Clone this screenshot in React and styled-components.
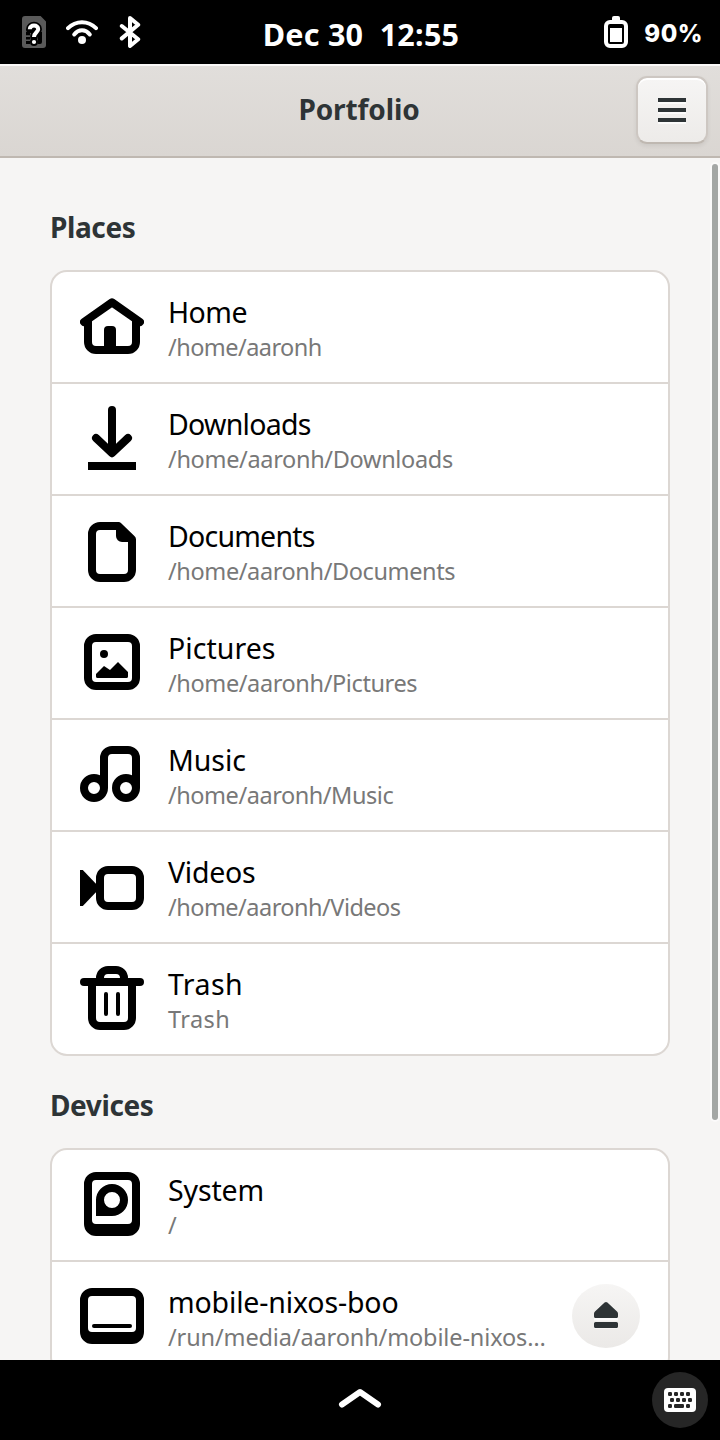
import React from 'react';
import styled, { createGlobalStyle } from 'styled-components';

const Global = createGlobalStyle`
  * { box-sizing: border-box; }
  body { margin: 0; background: #f6f5f4; }
`;

const Phone = styled.div`
  display: flex;
  flex-direction: column;
  width: 720px;
  height: 1440px;
  overflow: hidden;
  font-family: 'Noto Sans', Cantarell, sans-serif;
  background: #f6f5f4;
`;

const StatusBar = styled.header`
  flex: none;
  display: grid;
  grid-template-columns: 1fr auto 1fr;
  align-items: center;
  height: 64px;
  padding: 0 17px 0 18px;
  color: #fff;
  background: #000;
`;

const StatusGroup = styled.div`
  display: flex;
  align-items: center;
  gap: ${(p) => p.$gap};
  justify-content: ${(p) => (p.$end ? 'flex-end' : 'flex-start')};
`;

const Clock = styled.div`
  font-size: 30.5px;
  font-weight: 660;
  line-height: 40px;
  letter-spacing: 0.25px;
  white-space: pre;
  padding: 3px 0 0 1px;
`;

const BatteryText = styled.span`
  font-family: Inter, sans-serif;
  font-size: 24px;
  font-weight: 800;
  line-height: 32px;
  letter-spacing: 0.5px;
  padding-top: 3px;
`;

const Glyph = styled.svg`
  flex: none;
  display: block;
  width: ${(p) => p.$size || 32}px;
  height: ${(p) => p.$size || 32}px;
`;

const HeaderBar = styled.div`
  flex: none;
  display: grid;
  grid-template-columns: 72px 1fr 72px;
  align-items: center;
  height: 94px;
  padding: 0 12px 2px;
  border-top: 2px solid #faf9f8;
  border-bottom: 2px solid #bfb8b1;
  background: linear-gradient(#e1dedb, #dad6d2);
`;

const WindowTitle = styled.h1`
  grid-column: 2;
  margin: 0;
  padding: 0 2px 2px 0;
  text-align: center;
  font-size: 28px;
  font-weight: 670;
  line-height: 40px;
  letter-spacing: -0.1px;
  color: #2e3436;
`;

const MenuButton = styled.button`
  display: flex;
  flex-direction: column;
  align-items: center;
  justify-content: center;
  gap: 6px;
  width: 72px;
  height: 68px;
  padding: 0;
  border: 2px solid #cdc7c2;
  border-bottom-color: #bfb8b1;
  border-radius: 11px;
  background: linear-gradient(#f6f5f4, #edebe9);
  box-shadow: inset 0 2px #fff, 0 2px 4px rgba(0, 0, 0, 0.07);
`;

const MenuLine = styled.span`
  width: 28px;
  height: 4px;
  background: #2e3436;
  box-shadow: 0 2px rgba(255, 255, 255, 0.75);
`;

const Content = styled.main`
  position: relative;
  flex: 1;
  min-height: 0;
  overflow: hidden;
  padding: 49px 50px 0;
`;

const ScrollThumb = styled.div`
  position: absolute;
  top: 6px;
  right: 2px;
  width: 6px;
  height: 956px;
  border-radius: 3px;
  background: #a4a7a5;
  box-shadow: 0 0 0 2px rgba(255, 255, 255, 0.5);
`;

const SectionTitle = styled.h2`
  margin: 0 0 23px;
  font-size: 28px;
  font-weight: 670;
  line-height: 40px;
  letter-spacing: -0.39px;
  color: #2e3436;
`;

const Card = styled.section`
  margin-bottom: 29px;
  border: 2px solid #dcd7d3;
  border-radius: 17px;
  background: #fff;
  overflow: hidden;
`;

const Row = styled.div`
  display: flex;
  align-items: center;
  height: 110px;
  padding: 0 28px;
  gap: 24px;

  & + & {
    height: 112px;
    border-top: 2px solid #dcd7d3;
  }
`;

const RowIcon = styled(Glyph)`
  margin-bottom: 2px;
  color: #000;
`;

const Labels = styled.div`
  flex: 1;
  min-width: 0;
  padding-top: 2px;
  white-space: nowrap;
  font-weight: 370;
`;

const Name = styled.div`
  font-size: 28.5px;
  line-height: 38px;
  letter-spacing: ${(p) => p.$track}px;
  color: #000;
`;

const Path = styled.div`
  font-size: 23.5px;
  line-height: 33px;
  letter-spacing: ${(p) => p.$track}px;
  color: #787878;
`;

const EjectButton = styled.button`
  flex: none;
  display: grid;
  place-items: center;
  width: 68px;
  height: 64px;
  margin-bottom: 2px;
  padding: 0;
  border: 0;
  border-radius: 34px / 32px;
  background: linear-gradient(#f6f5f4, #ebe9e7);
`;

const BottomBar = styled.footer`
  flex: none;
  display: grid;
  grid-template-columns: 56px 1fr 56px;
  align-items: center;
  height: 80px;
  padding: 0 12px;
  background: #000;
`;

const Chevron = styled.svg`
  grid-column: 2;
  justify-self: center;
  display: block;
  width: 48px;
  height: 32px;
  margin-bottom: 6px;
`;

const KeyboardButton = styled.div`
  display: grid;
  place-items: center;
  width: 56px;
  height: 56px;
  border-radius: 50%;
  background: #262626;
`;

const ICONS = {
  home: (
    <g fill="none" stroke="currentColor" strokeWidth="2">
      <path d="M1 7 8 2.1 15 7" strokeLinecap="round" strokeLinejoin="round" />
      <path d="M2 6.6V12a2 2 0 0 0 2 2h8a2 2 0 0 0 2-2V6.6" />
      <path d="M6 14V9a1 1 0 0 1 1-1h1a1 1 0 0 1 1 1v5z" fill="currentColor" stroke="none" />
    </g>
  ),
  downloads: (
    <g fill="none" stroke="currentColor" strokeWidth="2">
      <path d="M8 1v10.7M4 8l4 3.8L12 8" strokeLinecap="round" strokeLinejoin="round" />
      <path d="M2 15h12" />
    </g>
  ),
  documents: (
    <path
      fill="currentColor"
      fillRule="evenodd"
      d="M5 1h4.6a1 1 0 0 1 .7.3l3.3 3.2a1 1 0 0 1 .4.8V13a3 3 0 0 1-3 3H5a3 3 0 0 1-3-3V4a3 3 0 0 1 3-3zM5 3a1 1 0 0 0-1 1v9a1 1 0 0 0 1 1h6a1 1 0 0 0 1-1V6h-1.5a1.5 1.5 0 0 1-1.5-1.5V3z"
    />
  ),
  pictures: (
    <g fill="currentColor">
      <rect x="2" y="2" width="12" height="12" rx="2" fill="none" stroke="currentColor" strokeWidth="2" />
      <circle cx="6" cy="6" r="1" />
      <path d="M4 11.6V11l2-2 1.5 1L9.5 8l2.5 2.5v1.1a.4.4 0 0 1-.4.4H4.4a.4.4 0 0 1-.4-.4z" />
    </g>
  ),
  music: (
    <g fill="none" stroke="currentColor" strokeWidth="2">
      <circle cx="3.5" cy="11.5" r="2.5" />
      <circle cx="11.5" cy="11.5" r="2.5" />
      <path d="M6 11.5V4a2 2 0 0 1 2-2h4a2 2 0 0 1 2 2v7.5" />
    </g>
  ),
  videos: (
    <g fill="currentColor">
      <rect x="5" y="4" width="10" height="9" rx="2" fill="none" stroke="currentColor" strokeWidth="2" />
      <path d="M0 4h.7L5 8.5.7 13H0z" />
    </g>
  ),
  trash: (
    <g fill="none" stroke="currentColor" strokeWidth="2">
      <path d="M1 4h14" strokeLinecap="round" />
      <path d="M5 4V3a2 2 0 0 1 2-2h2a2 2 0 0 1 2 2v1" />
      <path d="M3 4v9a2 2 0 0 0 2 2h6a2 2 0 0 0 2-2V4" />
      <path d="M6.5 7v5M9.5 7v5" strokeWidth="1" strokeLinecap="round" />
    </g>
  ),
  system: (
    <path
      fill="currentColor"
      fillRule="evenodd"
      d="M4 0h8a3 3 0 0 1 3 3v10a3 3 0 0 1-3 3H4a3 3 0 0 1-3-3V3a3 3 0 0 1 3-3zM4 2a1 1 0 0 0-1 1v9a1 1 0 0 0 1 1h8a1 1 0 0 0 1-1V3a1 1 0 0 0-1-1zM8 3a4 4 0 1 1 0 8H4V7a4 4 0 0 1 4-4zM8 5a2 2 0 1 0 0 4 2 2 0 0 0 0-4z"
    />
  ),
  drive: (
    <g>
      <path
        fill="currentColor"
        fillRule="evenodd"
        d="M3 1h10a3 3 0 0 1 3 3v8a3 3 0 0 1-3 3H3a3 3 0 0 1-3-3V4a3 3 0 0 1 3-3zM3 3a1 1 0 0 0-1 1v7a1 1 0 0 0 1 1h10a1 1 0 0 0 1-1V4a1 1 0 0 0-1-1z"
      />
      <path d="M3.5 10.5h9" stroke="currentColor" strokeLinecap="round" />
    </g>
  ),
};

const PLACES = [
  ['home', 'Home', -0.5, '/home/aaronh', -0.55],
  ['downloads', 'Downloads', -0.74, '/home/aaronh/Downloads', -0.33],
  ['documents', 'Documents', -0.78, '/home/aaronh/Documents', -0.39],
  ['pictures', 'Pictures', 0.05, '/home/aaronh/Pictures', -0.39],
  ['music', 'Music', -0.07, '/home/aaronh/Music', -0.46],
  ['videos', 'Videos', -0.28, '/home/aaronh/Videos', -0.52],
  ['trash', 'Trash', 0.45, 'Trash', 0.42],
];

const RowBody = ({ icon, name, nameTrack, path, pathTrack }) => (
  <>
    <RowIcon $size={64} viewBox="0 0 16 16">{ICONS[icon]}</RowIcon>
    <Labels>
      <Name $track={nameTrack}>{name}</Name>
      <Path $track={pathTrack}>{path}</Path>
    </Labels>
  </>
);

const SimIcon = () => (
  <Glyph viewBox="0 0 16 16">
    <path d="M3.5 0h7.8L14 2.8v11.7a1.5 1.5 0 0 1-1.5 1.5h-9A1.5 1.5 0 0 1 2 14.5v-13A1.5 1.5 0 0 1 3.5 0z" fill="#5a5a5a" />
    <path d="M4 8h2v1.6H4zM4 10.5h2v1.2H4zM4 12.5h2V14H4zM10 8h2v5a1 1 0 0 1-1 1h-1z" fill="#000" />
    <path
      d="M5.9 6.6C5.9 5.5 6.8 4.8 8 4.8s2.1.7 2.1 1.8c0 1.5-2.1 1.6-2.1 3.9"
      fill="none"
      stroke="#000"
      strokeWidth="3.8"
      strokeLinecap="round"
    />
    <circle cx="8" cy="13" r="2" fill="#000" />
    <path
      d="M5.9 6.6C5.9 5.5 6.8 4.8 8 4.8s2.1.7 2.1 1.8c0 1.5-2.1 1.6-2.1 3.9"
      fill="none"
      stroke="#fff"
      strokeWidth="2"
    />
    <circle cx="8" cy="13" r="1.05" fill="#fff" />
  </Glyph>
);

const WifiIcon = () => (
  <Glyph viewBox="0 0 16 16">
    <g fill="none" stroke="#fff" strokeWidth="2" strokeLinecap="round">
      <path d="M1 6.1C5 2.1 11 2.1 15 6.1" />
      <path d="M4.1 9.2C6.3 6.5 9.7 6.5 11.9 9.2" />
    </g>
    <circle cx="8" cy="12" r="2" fill="#fff" />
  </Glyph>
);

const BluetoothIcon = () => (
  <Glyph viewBox="0 0 16 16">
    <path
      d="M3.9 5 12.1 11.6 8 15V1l4.1 3.4L3.9 11.2"
      fill="none"
      stroke="#fff"
      strokeWidth="2"
      strokeLinecap="round"
      strokeLinejoin="round"
    />
  </Glyph>
);

const BatteryIcon = () => (
  <Glyph viewBox="0 0 16 16">
    <rect x="3" y="3" width="10" height="12" rx="2" fill="none" stroke="#fff" strokeWidth="2" />
    <path d="M6 2.5V1a1 1 0 0 1 1-1h2a1 1 0 0 1 1 1v1.5z" fill="#fff" />
    <path d="M5 6h6v7H5z" fill="#fff" />
  </Glyph>
);

const EjectIcon = () => (
  <Glyph viewBox="0 0 16 16">
    <path d="M2 8h12v2.2H2zM2 12h12v2.2H2z" fill="#fff" opacity=".8" />
    <path
      d="M7.3 1.3a1 1 0 0 1 1.4 0L13.5 5.8a1.5 1.5 0 0 1 .5 1.1v1.300a.8.8 0 0 1-.8.8H2.800a.8.8 0 0 1-.8-.8V6.900a1.500 1.500 0 0 1 .5-1.100zM2.800 11h10.400a.8.8 0 0 1 .8.8v1.400a.8.8 0 0 1-.8.8H2.800a.8.8 0 0 1-.8-.8v-1.400a.8.8 0 0 1 .8-.8z"
      fill="#2e3436"
    />
  </Glyph>
);

const KEYS = [
  [2, 2], [5, 2], [8, 2], [11, 2],
  [3, 5], [6, 5], [9, 5], [12, 5],
  [2, 8], [11, 8],
];

const KeyboardIcon = () => (
  <Glyph viewBox="0 0 16 16">
    <rect x="0" y="2" width="16" height="12" rx="2" fill="#fff" />
    <g fill="#262626">
      {KEYS.map(([x, y]) => (
        <rect key={`${x}-${y}`} x={x} y={y + 2} width="2" height="2" rx="0.6" />
      ))}
      <rect x="5" y="10" width="5" height="2" rx="0.6" />
    </g>
  </Glyph>
);

export default function App() {
  return (
    <Phone>
      <Global />
      <StatusBar>
        <StatusGroup $gap="16px">
          <SimIcon />
          <WifiIcon />
          <BluetoothIcon />
        </StatusGroup>
        <Clock>{'Dec 30  12:55'}</Clock>
        <StatusGroup $gap="12px" $end>
          <BatteryIcon />
          <BatteryText>90%</BatteryText>
        </StatusGroup>
      </StatusBar>
      <HeaderBar>
        <WindowTitle>Portfolio</WindowTitle>
        <MenuButton aria-label="Menu">
          <MenuLine />
          <MenuLine />
          <MenuLine />
        </MenuButton>
      </HeaderBar>
      <Content>
        <SectionTitle>Places</SectionTitle>
        <Card>
          {PLACES.map(([icon, name, nameTrack, path, pathTrack]) => (
            <Row key={icon}>
              <RowBody icon={icon} name={name} nameTrack={nameTrack} path={path} pathTrack={pathTrack} />
            </Row>
          ))}
        </Card>
        <SectionTitle>Devices</SectionTitle>
        <Card>
          <Row>
            <RowBody icon="system" name="System" nameTrack={-0.15} path="/" pathTrack={0} />
          </Row>
          <Row>
            <RowBody
              icon="drive"
              name="mobile-nixos-boo"
              nameTrack={-0.15}
              path="/run/media/aaronh/mobile-nixos…"
              pathTrack={-0.13}
            />
            <EjectButton aria-label="Eject">
              <EjectIcon />
            </EjectButton>
          </Row>
        </Card>
        <ScrollThumb />
      </Content>
      <BottomBar>
        <Chevron viewBox="0 0 48 32">
          <path
            d="M6 23.5 24 11l18 12.5"
            fill="none"
            stroke="#fff"
            strokeWidth="6"
            strokeLinecap="round"
            strokeLinejoin="round"
          />
        </Chevron>
        <KeyboardButton>
          <KeyboardIcon />
        </KeyboardButton>
      </BottomBar>
    </Phone>
  );
}
